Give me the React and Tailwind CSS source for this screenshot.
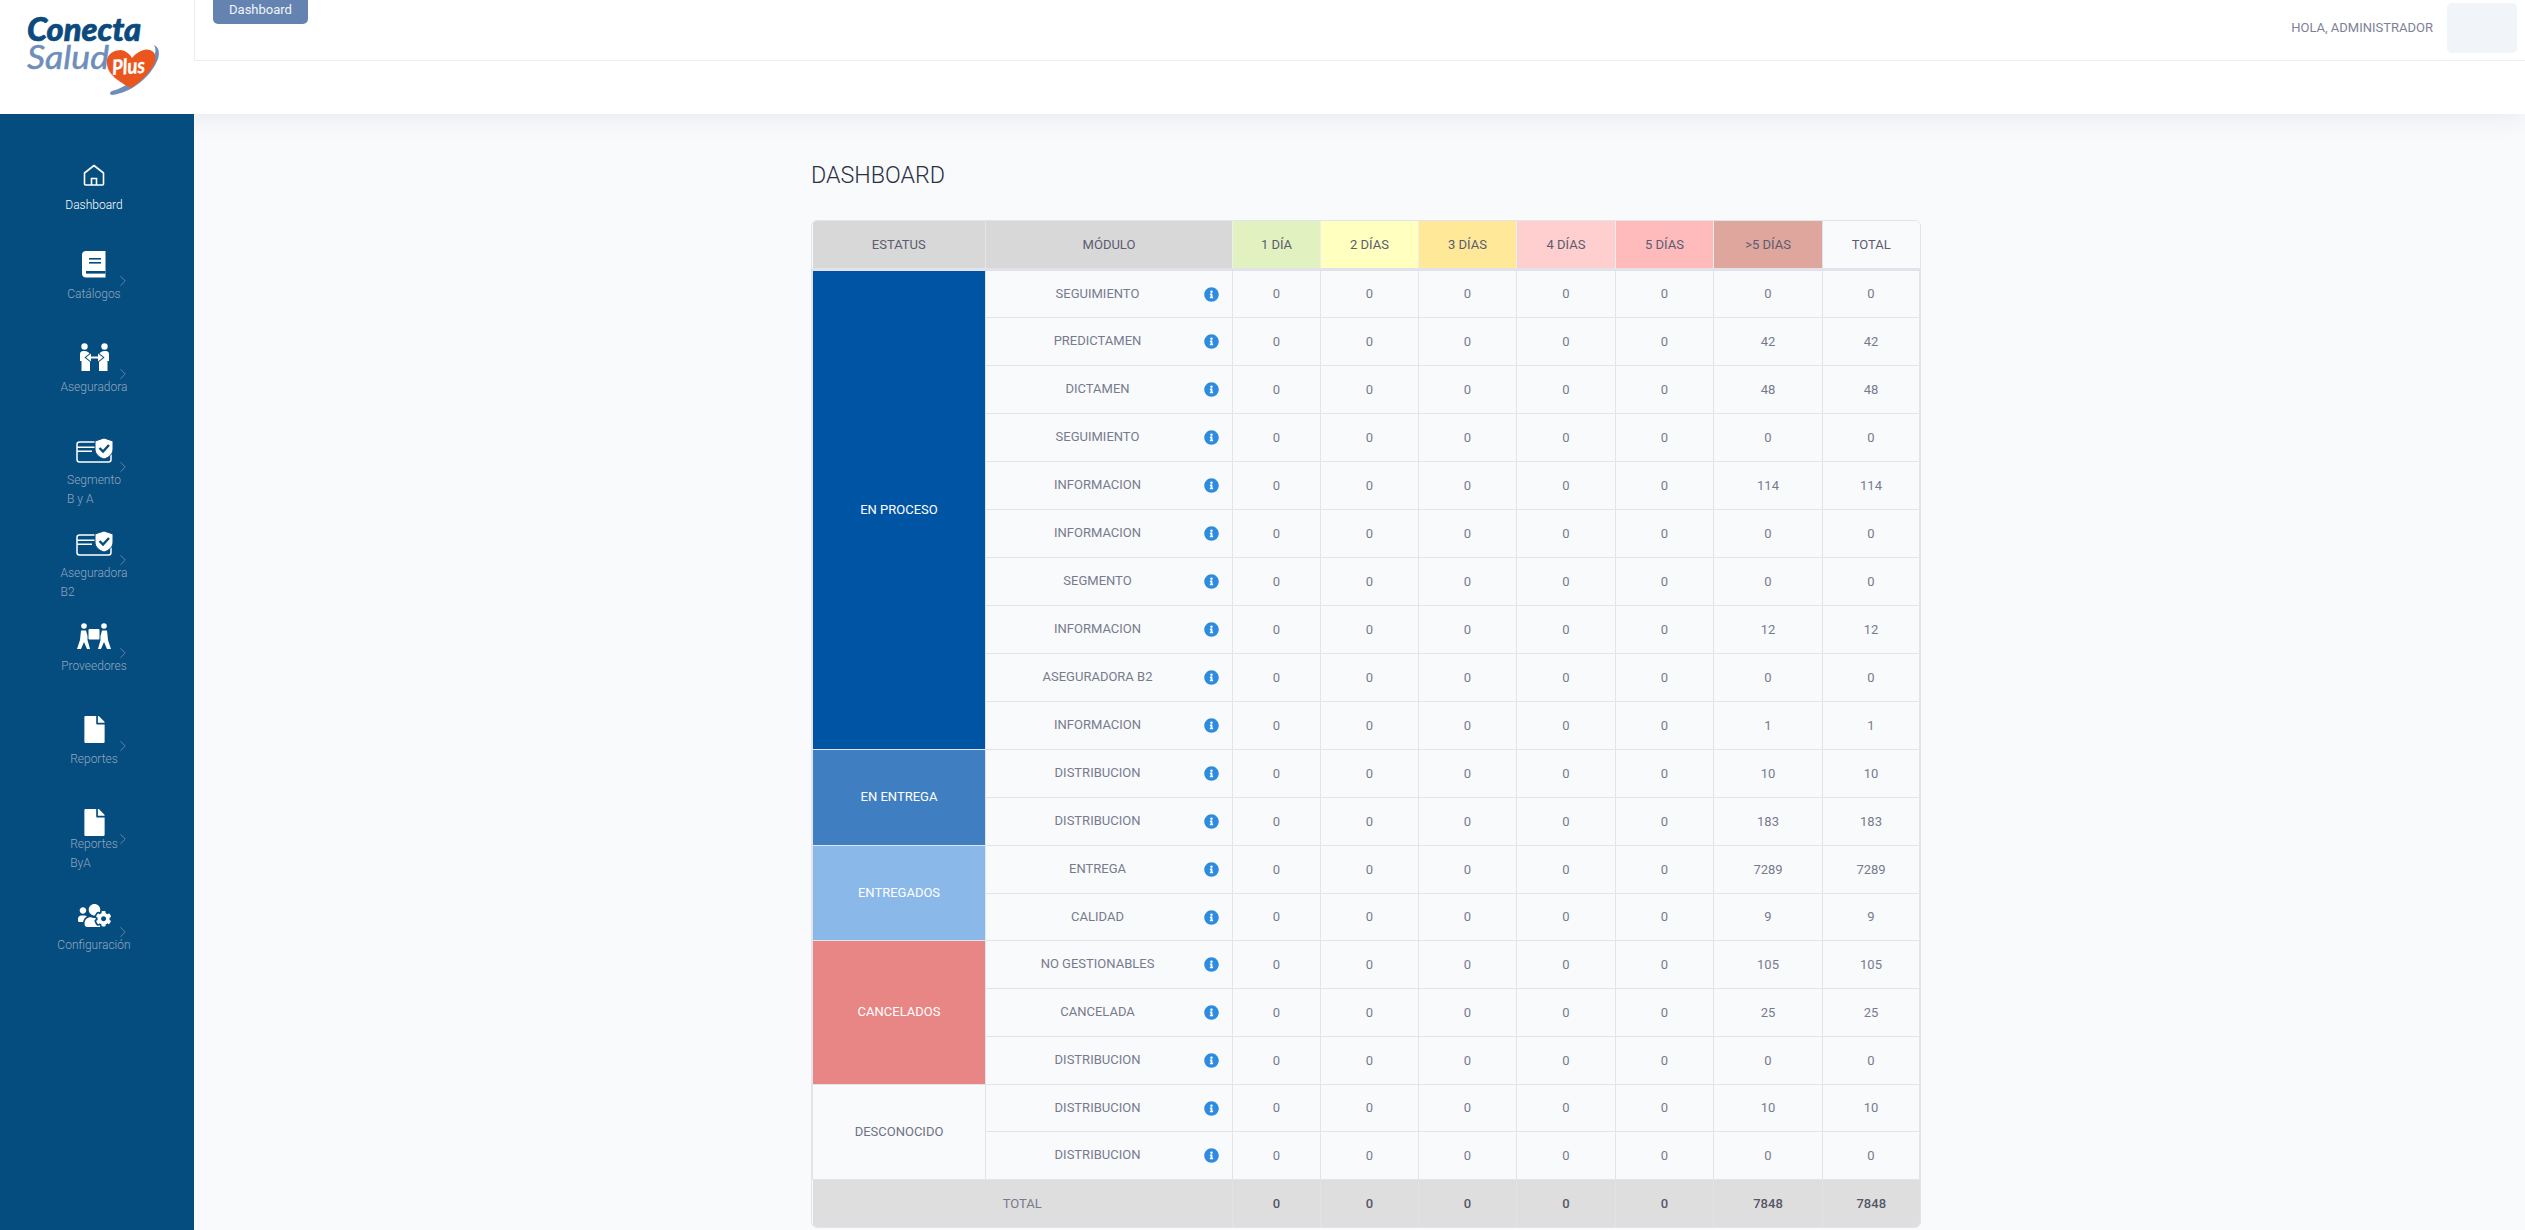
import React from 'react';
import { ChevronRight } from 'lucide-react';
import { FaInfoCircle, FaUsersCog, FaFile } from 'react-icons/fa';

// Logo: heart and swoosh are drawn, the words stay real text
const Logo = () => (
  <svg width="194" height="114" viewBox="0 0 194 114">
    <text x="27" y="41" textLength="114" lengthAdjust="spacingAndGlyphs" fill="#0c4a7e" stroke="#0c4a7e" strokeWidth="0.7" fontSize="33" fontWeight="900" fontStyle="italic" className="font-['Lato',sans-serif]">Conecta</text>
    <text x="27" y="69" textLength="82" lengthAdjust="spacingAndGlyphs" fill="#6d8ebb" stroke="#6d8ebb" strokeWidth="0.5" fontSize="33" fontStyle="italic" className="font-['Lato',sans-serif]">Salud</text>
    <path d="M112 95 C131 93 151 77 158 59 C160 53 159 47 154 45 C157 50 155 55 152 60 C143 75 127 87 112 91 C109 92 110 95 112 95 Z" fill="#6d8ebb" />
    <path d="M131 88 C119 82 107 74 107 63 C106 54 114 50 121 50 C126 51 130 54 132 58 C137 52 144 48 150 50 C156 52 157 59 154 64 C149 74 140 82 131 88 Z" fill="#ea561e" />
    <text x="112" y="74" textLength="33" lengthAdjust="spacingAndGlyphs" fill="#ffffff" stroke="#ffffff" strokeWidth="0.3" fontSize="21" fontWeight="700" fontStyle="italic" transform="rotate(-4 128 68)" className="font-['Lato',sans-serif]">Plus</text>
  </svg>
);

const HomeIcon = () => (
  <svg width="22" height="22" viewBox="0 0 22 22" fill="none" stroke="#fff" strokeWidth="1.6">
    <path d="M1.5 9 L11 1.5 L20.5 9 V20 a1 1 0 0 1 -1 1 H2.5 a1 1 0 0 1 -1 -1 Z" strokeLinejoin="round" />
    <path d="M8.5 21 V14.5 H13.5 V21" />
  </svg>
);

const BookIcon = () => (
  <svg width="24" height="27" viewBox="0 0 24 27">
    <path d="M4 0 H23.5 V26.5 H4 C1.5 26.5 0 25 0 22.5 V4 C0 1.5 1.5 0 4 0 Z" fill="#fff" />
    <rect x="7" y="7" width="12" height="1.6" fill="#054d7e" />
    <rect x="7" y="11" width="12" height="1.6" fill="#054d7e" />
    <rect x="4" y="20" width="19.5" height="2.6" fill="#054d7e" />
  </svg>
);

const ExchangeIcon = () => (
  <svg width="31" height="28" viewBox="0 0 31 28" fill="#fff">
    <circle cx="5.5" cy="3.5" r="3.2" />
    <circle cx="25.5" cy="3.5" r="3.2" />
    <path d="M1 11 C1 8.5 3 8 5.5 8 C8 8 9.5 9 10.5 10.5 L11 18 V28 H2.5 V18 H1 Z" />
    <path d="M30 11 C30 8.5 28 8 25.5 8 C23 8 21.5 9 20.5 10.5 L20 18 V28 H28.5 V18 H30 Z" />
    <path d="M7 14.5 L12 10.5 V13.4 H19 V10.5 L24 14.5 L19 18.5 V15.6 H12 V18.5 Z" stroke="#054d7e" strokeWidth="2" paintOrder="stroke" />
  </svg>
);

const CardIcon = () => (
  <svg width="37" height="25" viewBox="0 0 37 25">
    <rect x="1" y="4" width="34" height="20" rx="2.5" fill="none" stroke="#fff" strokeWidth="1.5" />
    <rect x="1" y="8.5" width="20" height="1.5" fill="#fff" />
    <rect x="1" y="12.5" width="15" height="1.5" fill="#fff" />
    <path d="M28 0 L37 3 V11 C37 16 33 19.5 28 21 C23 19.5 19 16 19 11 V3 Z" fill="#fff" stroke="#054d7e" strokeWidth="1" />
    <path d="M23.5 10 L27 13.5 L33 7" fill="none" stroke="#054d7e" strokeWidth="2.4" />
  </svg>
);

const MoversIcon = () => (
  <svg width="34" height="27" viewBox="0 0 34 27" fill="#fff">
    <circle cx="7" cy="3" r="2.8" />
    <circle cx="27" cy="3" r="2.8" />
    <rect x="11.5" y="6" width="11" height="10.5" rx="1" />
    <path d="M4 7.5 H9 L10.5 13 V17 L13 26 H10 L7 19 L4 26 H0 L3 17 Z" />
    <path d="M30 7.5 H25 L23.5 13 V17 L21 26 H24 L27 19 L30 26 H34 L31 17 Z" />
  </svg>
);

const navItems = [
  { label: ['Dashboard'], icon: <HomeIcon />, active: true, height: 'h-[89px]' },
  { label: ['Catálogos'], icon: <BookIcon />, height: 'h-[93px]' },
  { label: ['Aseguradora'], icon: <ExchangeIcon />, height: 'h-[93px]' },
  { label: ['Segmento', 'B y A'], icon: <CardIcon />, height: 'h-[93px]' },
  { label: ['Aseguradora', 'B2'], icon: <CardIcon />, height: 'h-[93px]' },
  { label: ['Proveedores'], icon: <MoversIcon />, height: 'h-[93px]' },
  { label: ['Reportes'], icon: <FaFile size={27} color="#fff" />, height: 'h-[93px]' },
  { label: ['Reportes', 'ByA'], icon: <FaFile size={27} color="#fff" />, height: 'h-[93px]', tight: true },
  { label: ['Configuración'], icon: <FaUsersCog size={33} color="#fff" />, height: 'h-[93px]' },
];

const Sidebar = () => (
  <aside className="relative z-20 w-[194px] shrink-0 bg-[#054d7e] pt-[46px]">
    {navItems.map((item, i) => (
      <div key={i} className={`relative flex flex-col items-center pr-[6px] ${item.height}`}>
        <div className="flex h-[30px] items-center justify-center">{item.icon}</div>
        <div className={`text-[12px] font-light leading-[19px] ${item.tight ? '-mt-[2px]' : 'mt-[6px]'} ${item.active ? 'text-white' : 'text-[#93a6c0]'}`}>
          {item.label.map((line) => <div key={line}>{line}</div>)}
        </div>
        {!item.active && (
          <ChevronRight size={18} strokeWidth={1.3} className="absolute left-[114px] top-[23px] text-[#6c82a2]" />
        )}
      </div>
    ))}
  </aside>
);

const Header = () => (
  <header className="relative z-10 flex h-[114px] shrink-0 bg-white shadow-[0_0_26px_rgba(40,50,80,0.10)]">
    <div className="w-[194px] shrink-0"><Logo /></div>
    <div className="flex h-[61px] flex-1 items-start justify-between border-b border-l border-[#eceef2] pl-[18px] pr-[8px]">
      <div className="flex h-[24px] w-[95px] items-center justify-center rounded-b-[5px] bg-[#6483b0] pb-[5px] text-[13px] text-[#f1f5fa]">Dashboard</div>
      <div className="flex items-center gap-[14px] pt-[3px]">
        <span className="text-[13px] text-[#7d8199]">HOLA, ADMINISTRADOR</span>
        <div className="h-[50px] w-[70px] rounded-[5px] bg-[#f1f4f8]" />
      </div>
    </div>
  </header>
);

const days = [
  { label: '1 DÍA', bg: 'bg-[#e1f1bf]' },
  { label: '2 DÍAS', bg: 'bg-[#ffffbf]' },
  { label: '3 DÍAS', bg: 'bg-[#ffe999]' },
  { label: '4 DÍAS', bg: 'bg-[#ffcfcf]' },
  { label: '5 DÍAS', bg: 'bg-[#ffbbbb]' },
  { label: '>5 DÍAS', bg: 'bg-[#dfa69e]' },
];

const groups = [
  {
    name: 'EN PROCESO', cls: 'bg-[#0054a4] text-white',
    rows: [['SEGUIMIENTO', 0], ['PREDICTAMEN', 42], ['DICTAMEN', 48], ['SEGUIMIENTO', 0], ['INFORMACION', 114], ['INFORMACION', 0], ['SEGMENTO', 0], ['INFORMACION', 12], ['ASEGURADORA B2', 0], ['INFORMACION', 1]],
  },
  { name: 'EN ENTREGA', cls: 'bg-[#3f7fc1] text-white', rows: [['DISTRIBUCION', 10], ['DISTRIBUCION', 183]] },
  { name: 'ENTREGADOS', cls: 'bg-[#8ab8e8] text-white', rows: [['ENTREGA', 7289], ['CALIDAD', 9]] },
  { name: 'CANCELADOS', cls: 'bg-[#e88686] text-white', rows: [['NO GESTIONABLES', 105], ['CANCELADA', 25], ['DISTRIBUCION', 0]] },
  { name: 'DESCONOCIDO', cls: 'bg-[#f9fafc] text-[#6f7285]', rows: [['DISTRIBUCION', 10], ['DISTRIBUCION', 0]] },
];

const cell = 'border border-[#e3e4ea] pt-px text-center';

// the reference's rows drift slightly shorter than 48px near the bottom of the table
const shortRows = [13, 17];
const rowStart = (gi) => groups.slice(0, gi).reduce((n, g) => n + g.rows.length, 0);

const DashboardTable = () => (
  <div className="w-[1110px] overflow-hidden rounded-[6px] border border-[#e3e4ea]">
    <table className="w-full table-fixed border-collapse text-[13px] font-normal text-[#777a8e]">
      <colgroup>
        <col className="w-[173px]" />
        <col className="w-[247px]" />
        <col className="w-[88px]" />
        <col className="w-[98px]" />
        <col className="w-[98px]" />
        <col className="w-[99px]" />
        <col className="w-[98px]" />
        <col className="w-[109px]" />
        <col />
      </colgroup>
      <thead>
        <tr className="h-[48px] border-b-[3px] border-[#e1e2ea] text-[#5b5c70]">
          <th className="bg-[#d9d8d8] font-normal">ESTATUS</th>
          <th className="border-l border-[#e6e6e8] bg-[#d9d8d8] font-normal">MÓDULO</th>
          {days.map((d) => (
            <th key={d.label} className={`border-l border-[#eeeeee] font-normal ${d.bg}`}>{d.label}</th>
          ))}
          <th className="border-l border-[#e3e4ea] bg-[#f9fafc] font-normal">TOTAL</th>
        </tr>
      </thead>
      <tbody>
        {groups.map((g, gi) =>
          g.rows.map(([mod, val], i) => (
            <tr key={g.name + i} className={shortRows.includes(rowStart(gi) + i) ? 'h-[47px]' : 'h-[48px]'}>
              {i === 0 && (
                <td rowSpan={g.rows.length} className={`border border-[#e3e4ea] text-center ${g.cls}`}>{g.name}</td>
              )}
              <td className={cell}>
                <div className="flex items-center pl-[5px] pr-[13px]">
                  <span className="flex-1 pb-[1px]">{mod}</span>
                  <FaInfoCircle size={15} className="shrink-0 text-[#2f8be0]" />
                </div>
              </td>
              {days.slice(0, 5).map((d) => <td key={d.label} className={cell}>0</td>)}
              <td className={cell}>{val}</td>
              <td className={cell}>{val}</td>
            </tr>
          ))
        )}
        <tr className="h-[48px] bg-[#dedede]">
          <td colSpan={2} className="text-center">TOTAL</td>
          {[0, 0, 0, 0, 0, 7848, 7848].map((n, i) => (
            <td key={i} className="border-l border-[#e3e3e6] text-center font-medium text-[#55566a]">{n}</td>
          ))}
        </tr>
      </tbody>
    </table>
  </div>
);

export default function App() {
  return (
    <div className="flex h-[1230px] flex-col overflow-hidden bg-[#f9fafc] font-['Roboto',sans-serif]">
      <Header />
      <div className="flex flex-1">
        <Sidebar />
        <main className="flex-1 pl-[617px] pt-[47px]">
          <h1 className="text-[23.25px] font-light leading-[28px] text-[#2c3142]">DASHBOARD</h1>
          <div className="mt-[31px]">
            <DashboardTable />
          </div>
        </main>
      </div>
    </div>
  );
}
